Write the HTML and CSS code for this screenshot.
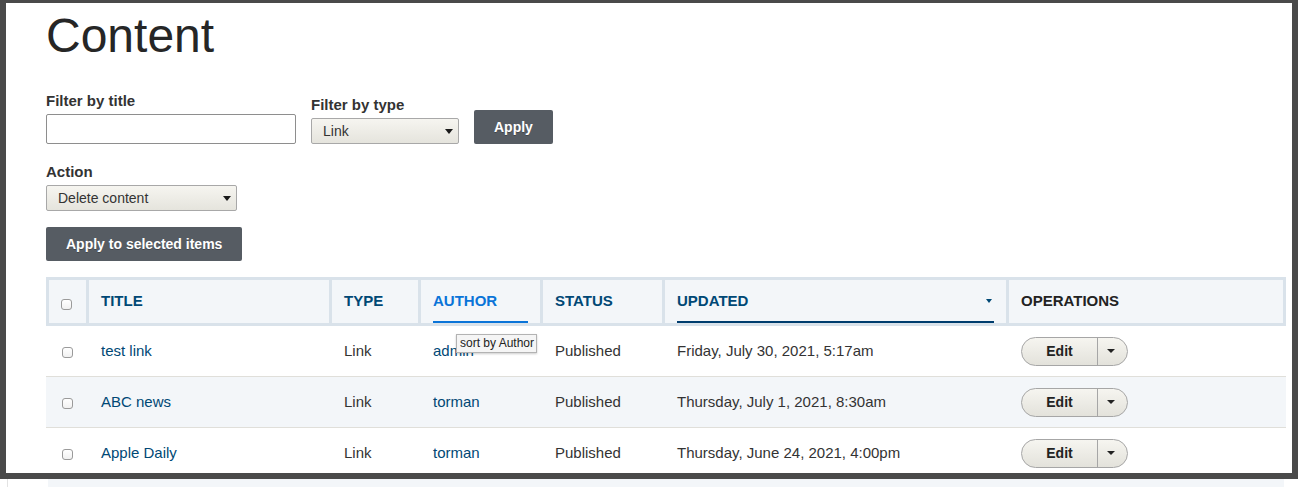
FILE: index.html
```html
<!DOCTYPE html>
<html>
  <head>
    <title>Content</title>
    <link rel="stylesheet" href="styles.css">
  </head>
  <body>
    <div class="frame">
      <main class="page">
        <h1 class="page-title">Content</h1>

        <form class="filters">
          <div class="field">
            <label class="field-label" for="title">Filter by title</label>
            <input class="text-input" type="text" id="title">
          </div>
          <div class="field">
            <label class="field-label" for="type">Filter by type</label>
            <span class="select">
              <select id="type" class="select-type">
                <option>Link</option>
              </select>
            </span>
          </div>
          <button type="button" class="btn">Apply</button>
        </form>

        <div class="bulk">
          <label class="field-label" for="action">Action</label>
          <span class="select">
            <select id="action" class="select-action">
              <option>Delete content</option>
            </select>
          </span>
          <div>
            <button type="button" class="btn btn-bulk">Apply to selected items</button>
          </div>
        </div>

        <table class="content-table">
          <colgroup>
            <col class="col-check">
            <col class="col-title">
            <col class="col-type">
            <col class="col-author">
            <col class="col-status">
            <col class="col-updated">
            <col class="col-ops">
          </colgroup>
          <thead>
            <tr>
              <th class="th-check"><input type="checkbox" class="check"></th>
              <th><span class="th-label">Title</span></th>
              <th><span class="th-label">Type</span></th>
              <th class="th-author">
                <span class="th-label is-hover">Author</span>
                <span class="tooltip">sort by Author</span>
              </th>
              <th><span class="th-label">Status</span></th>
              <th><span class="th-label is-active">Updated</span></th>
              <th><span class="th-label is-plain">Operations</span></th>
            </tr>
          </thead>
          <tbody>
            <tr>
              <td class="td-check"><input type="checkbox" class="check"></td>
              <td><a href="#">test link</a></td>
              <td>Link</td>
              <td><a href="#">admin</a></td>
              <td>Published</td>
              <td>Friday, July 30, 2021, 5:17am</td>
              <td>
                <span class="dropbutton"><span class="dropbutton-action">Edit</span><span class="dropbutton-toggle"></span></span>
              </td>
            </tr>
            <tr class="even">
              <td class="td-check"><input type="checkbox" class="check"></td>
              <td><a href="#">ABC news</a></td>
              <td>Link</td>
              <td><a href="#">torman</a></td>
              <td>Published</td>
              <td>Thursday, July 1, 2021, 8:30am</td>
              <td>
                <span class="dropbutton"><span class="dropbutton-action">Edit</span><span class="dropbutton-toggle"></span></span>
              </td>
            </tr>
            <tr>
              <td class="td-check"><input type="checkbox" class="check"></td>
              <td><a href="#">Apple Daily</a></td>
              <td>Link</td>
              <td><a href="#">torman</a></td>
              <td>Published</td>
              <td>Thursday, June 24, 2021, 4:00pm</td>
              <td>
                <span class="dropbutton"><span class="dropbutton-action">Edit</span><span class="dropbutton-toggle"></span></span>
              </td>
            </tr>
          </tbody>
        </table>
      </main>
    </div>

    <div class="peek"><div class="peek-row"></div></div>
  </body>
</html>
```

FILE: styles.css
```css
/* Marco de la ventana */
* {
  box-sizing: border-box;
}

body {
  margin: 0;
  background-color: #ffffff;
  font-family: "Liberation Sans", Arial, sans-serif;
  color: #333;
}

.frame {
  width: 1298px;
  height: 479px;
  border-style: solid;
  border-color: #4a4a4a;
  border-width: 3px 6px 6px 6px;
  overflow: hidden;
  background-color: #ffffff;
}

.page {
  padding: 0 6px 0 40px;
}

.page-title {
  margin: 9px 0 0;
  font-size: 48px;
  line-height: 48px;
  font-weight: normal;
  color: #262626;
}

/* Filtros */
.filters {
  display: flex;
  align-items: flex-end;
  gap: 15px;
  margin-top: 32px;
}

.field {
  display: flex;
  flex-direction: column;
  align-items: flex-start;
}

.field-label {
  display: block;
  font-size: 15px;
  line-height: 18px;
  font-weight: bold;
  color: #333;
  margin-bottom: 4px;
}

.text-input {
  width: 250px;
  height: 30px;
  border: 1px solid #8e8e8e;
  border-radius: 2px;
  background-color: #fff;
  font: inherit;
}

.select {
  display: inline-block;
  position: relative;
}

.select select {
  -webkit-appearance: none;
  appearance: none;
  height: 26px;
  padding: 0 24px 0 11px;
  border: 1px solid #a8a8a8;
  border-radius: 2px;
  background: linear-gradient(#f6f5f0, #e5e4dd);
  font-family: "Liberation Sans", Arial, sans-serif;
  font-size: 14px;
  color: #333;
}

.select::after {
  content: "";
  position: absolute;
  right: 6px;
  top: 11px;
  border-left: 4.5px solid transparent;
  border-right: 4.5px solid transparent;
  border-top: 5px solid #1a1a1a;
  pointer-events: none;
}

.select-type {
  width: 148px;
}

.select-action {
  width: 191px;
}

.btn {
  height: 34px;
  padding: 0 20px;
  border: none;
  border-radius: 2px;
  background-color: #565c63;
  color: #ffffff;
  font-family: "Liberation Sans", Arial, sans-serif;
  font-size: 14px;
  font-weight: bold;
  text-shadow: 0 1px 0 rgba(0, 0, 0, 0.25);
  cursor: pointer;
}

.bulk {
  margin-top: 19px;
}

.btn-bulk {
  margin-top: 16px;
}

/* Tabla de contenido */
.content-table {
  margin-top: 16px;
  width: 1240px;
  table-layout: fixed;
  border-collapse: separate;
  border-spacing: 0;
  font-size: 15px;
}

.col-check { width: 43px; }
.col-title { width: 243px; }
.col-type { width: 89px; }
.col-author { width: 122px; }
.col-status { width: 122px; }
.col-updated { width: 344px; }
.col-ops { width: 277px; }

.content-table th {
  padding: 12px 12px 0;
  background-color: #f3f6f9;
  border-top: 3px solid #d9e2ea;
  border-bottom: 3px solid #d9e2ea;
  border-right: 3px solid #d9e2ea;
  text-align: left;
  vertical-align: top;
  font-size: 15px;
  line-height: 18px;
  font-weight: bold;
  text-transform: uppercase;
  color: #004875;
}

.content-table th:first-child {
  border-left: 3px solid #d9e2ea;
}

.th-check {
  text-align: center;
}

.th-check .check {
  margin-top: 4px;
}

.th-label {
  display: flex;
  justify-content: space-between;
  align-items: center;
  padding-bottom: 11px;
  border-bottom: 2px solid transparent;
}

.th-label.is-hover {
  color: #0a74d8;
  border-bottom-color: #0a74d8;
}

.th-label.is-active {
  border-bottom-color: #003d6e;
}

.th-label.is-active::after {
  content: "";
  margin-right: 2px;
  border-left: 3.5px solid transparent;
  border-right: 3.5px solid transparent;
  border-top: 4px solid #004875;
}

.th-label.is-plain {
  color: #222;
}

.th-author {
  position: relative;
}

.tooltip {
  position: absolute;
  left: 35px;
  top: 54px;
  z-index: 2;
  padding: 0 2px 0 3px;
  border: 1px solid #b3b3b3;
  background-color: #f5f5f5;
  box-shadow: 0 1px 2px rgba(0, 0, 0, 0.2);
  font-size: 12px;
  line-height: 17px;
  font-weight: normal;
  text-transform: none;
  color: #222;
  white-space: nowrap;
}

.content-table td {
  height: 51px;
  padding: 0 12px;
  border-bottom: 1px solid #e0dfda;
  vertical-align: middle;
  line-height: 18px;
  color: #333;
  white-space: nowrap;
}

.content-table tr.even td {
  background-color: #f3f6f9;
}

.content-table td.td-check {
  padding: 0;
  text-align: center;
}

.content-table a {
  color: #004875;
  text-decoration: none;
}

.check {
  -webkit-appearance: none;
  appearance: none;
  display: inline-block;
  width: 11px;
  height: 11px;
  margin: 0;
  border: 1px solid #9a9a9a;
  border-radius: 3px;
  background: linear-gradient(#ffffff, #f1f1f1);
  vertical-align: middle;
}

/* Boton desplegable Edit */
.dropbutton {
  display: inline-flex;
  height: 29px;
  border: 1px solid #a6a6a6;
  border-radius: 15px;
  background: linear-gradient(#f6f5f0, #e3e2db);
  overflow: hidden;
}

.dropbutton-action {
  width: 75px;
  display: flex;
  align-items: center;
  justify-content: center;
  font-size: 14px;
  font-weight: bold;
  color: #222;
}

.dropbutton-toggle {
  width: 30px;
  display: flex;
  align-items: center;
  justify-content: center;
  border-left: 1px solid #a6a6a6;
}

.dropbutton-toggle::before {
  content: "";
  margin-right: 3px;
  border-left: 4px solid transparent;
  border-right: 4px solid transparent;
  border-top: 4px solid #222;
}

/* Parte de la pagina debajo del marco */
.peek {
  height: 8px;
  margin-left: 7px;
  border-left: 1px solid #e3e3e3;
}

.peek-row {
  margin-left: 40px;
  width: 1236px;
  height: 8px;
  background-color: #f3f6f9;
}
```
